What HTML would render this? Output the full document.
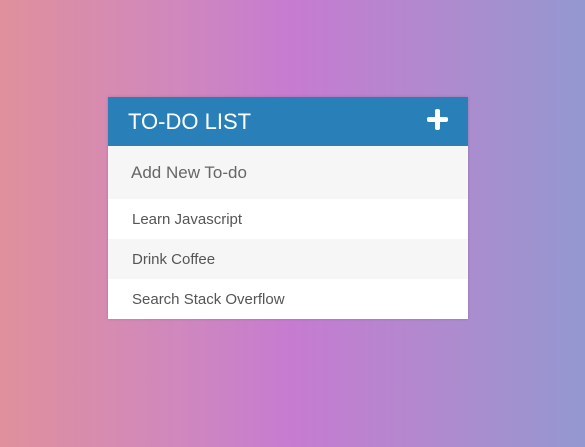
<!DOCTYPE html>
<html><head><style>
html,body{margin:0;padding:0;}
body{width:585px;height:447px;overflow:hidden;background:linear-gradient(to right,#e0909c 0%,#d088bd 30%,#c67bd1 50%,#b08ace 75%,#9498d0 100%);font-family:"Liberation Sans",sans-serif;position:relative;}
.card{position:absolute;left:108px;top:97px;width:360px;background:#fff;box-shadow:0 0 3px rgba(0,0,0,.15);}
.hd{height:49px;background:#2980b9;color:#fff;font-size:22px;line-height:50px;padding-left:20px;position:relative;}
.plus{position:absolute;right:20px;top:12px;width:21px;height:21px;}
.plus:before{content:"";position:absolute;left:0;top:8px;width:21px;height:5px;background:#fff;border-radius:2px;}
.plus:after{content:"";position:absolute;left:8px;top:0;width:5px;height:21px;background:#fff;border-radius:2px;}
.in{height:53px;background:#f6f6f6;color:#666;font-size:17px;line-height:53px;padding-left:23px;}
.it{height:40px;line-height:41px;font-size:15px;color:#555;padding-left:24px;background:#fff;}
.it.g{background:#f6f6f6;}
</style></head><body>
<div class="card">
<div class="hd">TO-DO LIST<div class="plus"></div></div>
<div class="in">Add New To-do</div>
<div class="it">Learn Javascript</div>
<div class="it g">Drink Coffee</div>
<div class="it">Search Stack Overflow</div>
</div>
</body></html>
